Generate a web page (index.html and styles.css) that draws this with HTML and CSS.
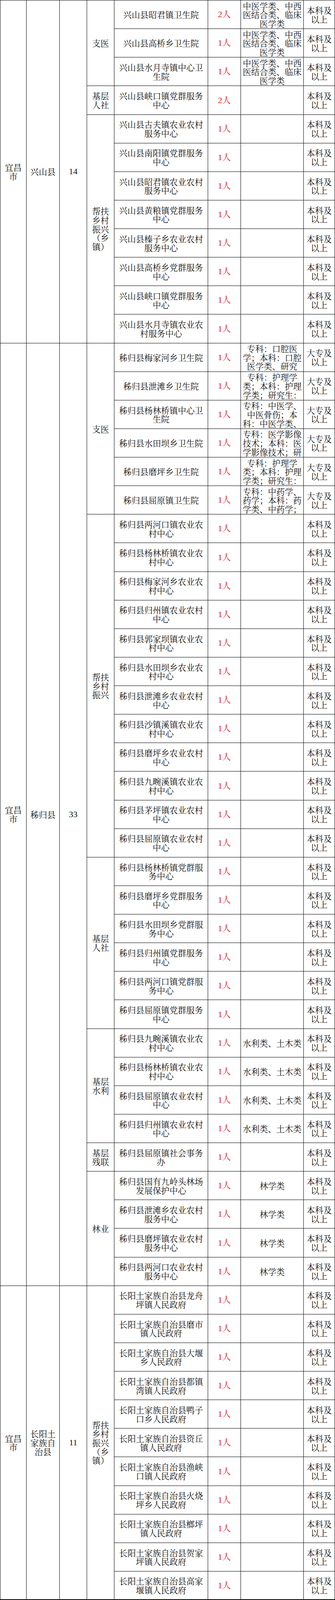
FILE: index.html
```html
<!DOCTYPE html>
<html lang="zh-CN">
<head>
<meta charset="utf-8">
<title>岗位表</title>
<link rel="stylesheet" href="styles.css">
</head>
<body>
<div class="grid">
<!-- 兴山县 -->
<div class="cell city r12">宜昌市</div>
<div class="cell county r12">兴山县</div>
<div class="cell num r12">14</div>
<div class="cell cat r3">支医</div>
<div class="cell unit">兴山县昭君镇卫生院</div><div class="cell cnt">2人</div><div class="cell major">中医学类、中西医结合类、临床医学类</div><div class="cell edu">本科及以上</div>
<div class="cell unit">兴山县高桥乡卫生院</div><div class="cell cnt">1人</div><div class="cell major">中医学类、中西医结合类、临床医学类</div><div class="cell edu">本科及以上</div>
<div class="cell unit">兴山县水月寺镇中心卫生院</div><div class="cell cnt">1人</div><div class="cell major">中医学类、中西医结合类、临床医学类</div><div class="cell edu">本科及以上</div>
<div class="cell cat">基层人社</div>
<div class="cell unit">兴山县峡口镇党群服务中心</div><div class="cell cnt">2人</div><div class="cell major"></div><div class="cell edu">本科及以上</div>
<div class="cell cat r8">帮扶乡村振兴（乡镇）</div>
<div class="cell unit">兴山县古夫镇农业农村服务中心</div><div class="cell cnt">1人</div><div class="cell major"></div><div class="cell edu">本科及以上</div>
<div class="cell unit">兴山县南阳镇党群服务中心</div><div class="cell cnt">1人</div><div class="cell major"></div><div class="cell edu">本科及以上</div>
<div class="cell unit">兴山县昭君镇农业农村服务中心</div><div class="cell cnt">1人</div><div class="cell major"></div><div class="cell edu">本科及以上</div>
<div class="cell unit">兴山县黄粮镇党群服务中心</div><div class="cell cnt">1人</div><div class="cell major"></div><div class="cell edu">本科及以上</div>
<div class="cell unit">兴山县榛子乡农业农村服务中心</div><div class="cell cnt">1人</div><div class="cell major"></div><div class="cell edu">本科及以上</div>
<div class="cell unit">兴山县高桥乡党群服务中心</div><div class="cell cnt">1人</div><div class="cell major"></div><div class="cell edu">本科及以上</div>
<div class="cell unit">兴山县峡口镇党群服务中心</div><div class="cell cnt">1人</div><div class="cell major"></div><div class="cell edu">本科及以上</div>
<div class="cell unit">兴山县水月寺镇农业农村服务中心</div><div class="cell cnt">1人</div><div class="cell major"></div><div class="cell edu">本科及以上</div>
<!-- 秭归县 -->
<div class="cell city r33">宜昌市</div>
<div class="cell county r33">秭归县</div>
<div class="cell num r33">33</div>
<div class="cell cat r6">支医</div>
<div class="cell unit">秭归县梅家河乡卫生院</div><div class="cell cnt">1人</div><div class="cell major">专科：口腔医学；本科：口腔医学类、研究</div><div class="cell edu">大专及以上</div>
<div class="cell unit">秭归县泄滩乡卫生院</div><div class="cell cnt">1人</div><div class="cell major">专科：护理学类；本科：护理学类；研究生：</div><div class="cell edu">大专及以上</div>
<div class="cell unit">秭归县杨林桥镇中心卫生院</div><div class="cell cnt">1人</div><div class="cell major">专科：中医学、中医骨伤；本科：中医学类、</div><div class="cell edu">大专及以上</div>
<div class="cell unit">秭归县水田坝乡卫生院</div><div class="cell cnt">1人</div><div class="cell major">专科：医学影像技术；本科：医学影像技术；研</div><div class="cell edu">大专及以上</div>
<div class="cell unit">秭归县磨坪乡卫生院</div><div class="cell cnt">1人</div><div class="cell major">专科：护理学类；本科：护理学类；研究生：</div><div class="cell edu">大专及以上</div>
<div class="cell unit">秭归县屈原镇卫生院</div><div class="cell cnt">1人</div><div class="cell major">专科：中药学、药学；本科：药学类、中药学；</div><div class="cell edu">大专及以上</div>
<div class="cell cat r12">帮扶乡村振兴</div>
<div class="cell unit">秭归县两河口镇农业农村中心</div><div class="cell cnt">1人</div><div class="cell major"></div><div class="cell edu">本科及以上</div>
<div class="cell unit">秭归县杨林桥镇农业农村中心</div><div class="cell cnt">1人</div><div class="cell major"></div><div class="cell edu">本科及以上</div>
<div class="cell unit">秭归县梅家河乡农业农村中心</div><div class="cell cnt">1人</div><div class="cell major"></div><div class="cell edu">本科及以上</div>
<div class="cell unit">秭归县归州镇农业农村中心</div><div class="cell cnt">1人</div><div class="cell major"></div><div class="cell edu">本科及以上</div>
<div class="cell unit">秭归县郭家坝镇农业农村中心</div><div class="cell cnt">1人</div><div class="cell major"></div><div class="cell edu">本科及以上</div>
<div class="cell unit">秭归县水田坝乡农业农村中心</div><div class="cell cnt">1人</div><div class="cell major"></div><div class="cell edu">本科及以上</div>
<div class="cell unit">秭归县泄滩乡农业农村中心</div><div class="cell cnt">1人</div><div class="cell major"></div><div class="cell edu">本科及以上</div>
<div class="cell unit">秭归县沙镇溪镇农业农村中心</div><div class="cell cnt">1人</div><div class="cell major"></div><div class="cell edu">本科及以上</div>
<div class="cell unit">秭归县磨坪乡农业农村中心</div><div class="cell cnt">1人</div><div class="cell major"></div><div class="cell edu">本科及以上</div>
<div class="cell unit">秭归县九畹溪镇农业农村中心</div><div class="cell cnt">1人</div><div class="cell major"></div><div class="cell edu">本科及以上</div>
<div class="cell unit">秭归县茅坪镇农业农村中心</div><div class="cell cnt">1人</div><div class="cell major"></div><div class="cell edu">本科及以上</div>
<div class="cell unit">秭归县屈原镇农业农村中心</div><div class="cell cnt">1人</div><div class="cell major"></div><div class="cell edu">本科及以上</div>
<div class="cell cat r6">基层人社</div>
<div class="cell unit">秭归县杨林桥镇党群服务中心</div><div class="cell cnt">1人</div><div class="cell major"></div><div class="cell edu">本科及以上</div>
<div class="cell unit">秭归县磨坪乡党群服务中心</div><div class="cell cnt">1人</div><div class="cell major"></div><div class="cell edu">本科及以上</div>
<div class="cell unit">秭归县水田坝乡党群服务中心</div><div class="cell cnt">1人</div><div class="cell major"></div><div class="cell edu">本科及以上</div>
<div class="cell unit">秭归县归州镇党群服务中心</div><div class="cell cnt">1人</div><div class="cell major"></div><div class="cell edu">本科及以上</div>
<div class="cell unit">秭归县两河口镇党群服务中心</div><div class="cell cnt">1人</div><div class="cell major"></div><div class="cell edu">本科及以上</div>
<div class="cell unit">秭归县屈原镇党群服务中心</div><div class="cell cnt">1人</div><div class="cell major"></div><div class="cell edu">本科及以上</div>
<div class="cell cat r4">基层水利</div>
<div class="cell unit">秭归县九畹溪镇农业农村中心</div><div class="cell cnt">1人</div><div class="cell major">水利类、土木类</div><div class="cell edu">本科及以上</div>
<div class="cell unit">秭归县杨林桥镇农业农村中心</div><div class="cell cnt">1人</div><div class="cell major">水利类、土木类</div><div class="cell edu">本科及以上</div>
<div class="cell unit">秭归县屈原镇农业农村中心</div><div class="cell cnt">1人</div><div class="cell major">水利类、土木类</div><div class="cell edu">本科及以上</div>
<div class="cell unit">秭归县归州镇农业农村中心</div><div class="cell cnt">1人</div><div class="cell major">水利类、土木类</div><div class="cell edu">本科及以上</div>
<div class="cell cat">基层残联</div>
<div class="cell unit">秭归县屈原镇社会事务办</div><div class="cell cnt">1人</div><div class="cell major"></div><div class="cell edu">本科及以上</div>
<div class="cell cat r4">林业</div>
<div class="cell unit">秭归县国有九岭头林场发展保护中心</div><div class="cell cnt">1人</div><div class="cell major">林学类</div><div class="cell edu">本科及以上</div>
<div class="cell unit">秭归县泄滩乡农业农村服务中心</div><div class="cell cnt">1人</div><div class="cell major">林学类</div><div class="cell edu">本科及以上</div>
<div class="cell unit">秭归县磨坪镇农业农村服务中心</div><div class="cell cnt">1人</div><div class="cell major">林学类</div><div class="cell edu">本科及以上</div>
<div class="cell unit">秭归县两河口农业农村服务中心</div><div class="cell cnt">1人</div><div class="cell major">林学类</div><div class="cell edu">本科及以上</div>
<!-- 长阳土家族自治县 -->
<div class="cell city r11 last">宜昌市</div>
<div class="cell county r11 last">长阳土家族自治县</div>
<div class="cell num r11 last">11</div>
<div class="cell cat r11 last">帮扶乡村振兴（乡镇）</div>
<div class="cell unit">长阳土家族自治县龙舟坪镇人民政府</div><div class="cell cnt">1人</div><div class="cell major"></div><div class="cell edu">本科及以上</div>
<div class="cell unit">长阳土家族自治县磨市镇人民政府</div><div class="cell cnt">1人</div><div class="cell major"></div><div class="cell edu">本科及以上</div>
<div class="cell unit">长阳土家族自治县大堰乡人民政府</div><div class="cell cnt">1人</div><div class="cell major"></div><div class="cell edu">本科及以上</div>
<div class="cell unit">长阳土家族自治县都镇湾镇人民政府</div><div class="cell cnt">1人</div><div class="cell major"></div><div class="cell edu">本科及以上</div>
<div class="cell unit">长阳土家族自治县鸭子口乡人民政府</div><div class="cell cnt">1人</div><div class="cell major"></div><div class="cell edu">本科及以上</div>
<div class="cell unit">长阳土家族自治县资丘镇人民政府</div><div class="cell cnt">1人</div><div class="cell major"></div><div class="cell edu">本科及以上</div>
<div class="cell unit">长阳土家族自治县渔峡口镇人民政府</div><div class="cell cnt">1人</div><div class="cell major"></div><div class="cell edu">本科及以上</div>
<div class="cell unit">长阳土家族自治县火烧坪乡人民政府</div><div class="cell cnt">1人</div><div class="cell major"></div><div class="cell edu">本科及以上</div>
<div class="cell unit">长阳土家族自治县榔坪镇人民政府</div><div class="cell cnt">1人</div><div class="cell major"></div><div class="cell edu">本科及以上</div>
<div class="cell unit">长阳土家族自治县贺家坪镇人民政府</div><div class="cell cnt">1人</div><div class="cell major"></div><div class="cell edu">本科及以上</div>
<div class="cell unit last">长阳土家族自治县高家堰镇人民政府</div><div class="cell cnt last">1人</div><div class="cell major last"></div><div class="cell edu last">本科及以上</div>
</div>
</body>
</html>
```

FILE: styles.css
```css
html, body {
  margin: 0;
  padding: 0;
  background: #fff;
}

/* The table fills the window height: 56 equal rows (86px each in a 4817px window). */
:root {
  --row: calc((100vh - 1px) / 56);
}

body {
  font-family: "Noto Serif CJK SC", "Noto Sans CJK SC", "Noto Sans", serif;
  font-size: 21.5px;
  line-height: calc(var(--row) * 0.3105);
  color: #111;
  text-spacing-trim: space-all;
}

.grid {
  display: grid;
  width: 858px;
  box-sizing: border-box;
  grid-template-columns: 67px 85px 70px 70px 240px 84px 161px 80px;
  grid-auto-rows: var(--row);
  border-top: 1px solid #000;
  border-left: 1px solid #000;
}

.cell {
  box-sizing: border-box;
  display: flex;
  align-items: center;
  justify-content: center;
  text-align: center;
  border-right: 1px solid #000;
  border-bottom: 1px solid #000;
  padding-top: 1px;
  min-width: 0;
}

.city { grid-column: 1; padding-left: 2px; padding-right: 2px; }
.county { grid-column: 2; padding-left: 4px; padding-right: 4px; }
.num {
  grid-column: 3;
  font-family: "Liberation Serif", serif;
  font-size: 22px;
}
.cat { grid-column: 4; padding-left: 4px; padding-right: 4px; }
.unit { grid-column: 5; padding-left: 6px; padding-right: 6px; }
.cnt {
  grid-column: 6;
  color: #e3141c;
  font-family: "Liberation Serif", "Noto Serif CJK SC", "Noto Sans CJK SC", serif;
  font-size: 22px;
}
.major { grid-column: 7; padding-left: 3px; padding-right: 3px; }
.edu { grid-column: 8; padding-left: 2px; padding-right: 2px; }

.r3 { grid-row: span 3; }
.r4 { grid-row: span 4; }
.r6 { grid-row: span 6; }
.r8 { grid-row: span 8; }
.r11 { grid-row: span 11; }
.r12 { grid-row: span 12; }
.r33 { grid-row: span 33; }

.last { border-bottom-width: 2px; }
```
